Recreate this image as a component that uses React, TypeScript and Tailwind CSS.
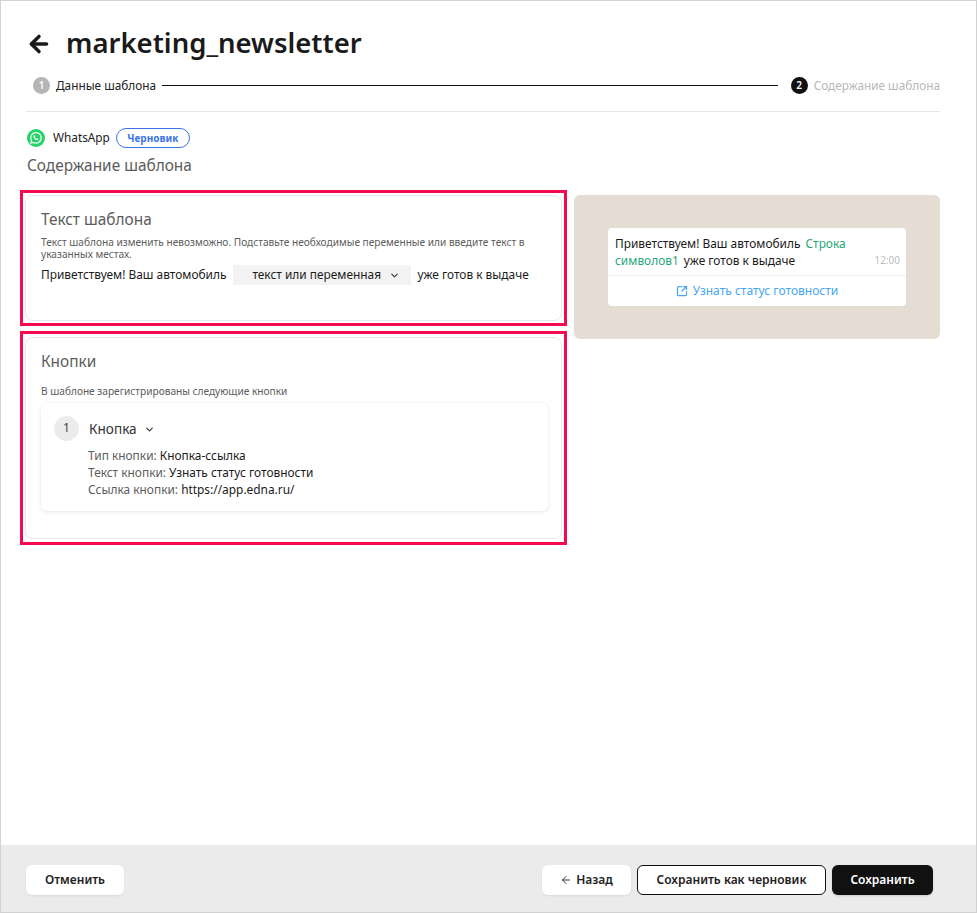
import { ArrowLeft, ChevronDown, SquareArrowOutUpRight } from 'lucide-react';

function WhatsAppIcon() {
  return (
    <svg width="18" height="18" viewBox="0 0 18 18" className="shrink-0">
      <circle cx="9" cy="9" r="9" fill="#25d366" />
      <path
        d="M9 3.7a5.2 5.2 0 0 0-4.5 7.9L3.9 14l2.5-.6A5.2 5.2 0 1 0 9 3.7z"
        fill="none"
        stroke="#fff"
        strokeWidth="1.2"
      />
      <path
        d="M7.2 6.3c-.2 0-.5.1-.6.4-.3.6-.3 1.2.1 1.9.5 1 1.4 1.9 2.5 2.3.7.3 1.3.2 1.8-.2.3-.3.4-.6.3-.9l-1.1-.6-.6.6c-.7-.2-1.4-.9-1.7-1.6l.5-.6-.6-1.2z"
        fill="#fff"
      />
    </svg>
  );
}

function Step({ num, label, active }: { num: number; label: string; active?: boolean }) {
  return (
    <div className="flex items-center gap-[6px] shrink-0">
      <span
        className={`flex h-[17px] w-[17px] items-center justify-center rounded-full text-[10px] font-semibold text-white ${
          active ? 'bg-[#111111]' : 'bg-[#b5b5b5]'
        }`}
      >
        {num}
      </span>
      <span className={`text-[11.8px] ${active ? 'text-[#b8b8b8]' : 'text-[#222222]'}`}>{label}</span>
    </div>
  );
}

export default function App() {
  return (
    <div
      className="flex h-[913px] w-[977px] flex-col border border-[#d2d2d2] bg-white text-[#1a1a1a]"
      style={{ fontFamily: '"Noto Sans", "Open Sans", sans-serif' }}
    >
      <div className="min-h-0 flex-1 pl-[19px] pr-[36px]">
        {/* Header */}
        <div className="flex h-[71px] items-end pb-[10px] pl-[6px]">
          <ArrowLeft size={26} strokeWidth={3.2} className="mr-[14px] mb-[5px] text-[#1a1a1a]" />
          <h1 className="text-[27.5px] leading-[38px] font-semibold text-[#1a1a1a]">marketing_newsletter</h1>
        </div>

        {/* Steps */}
        <div className="ml-[6px] flex h-[27px] items-center justify-between pl-[7px]">
          <Step num={1} label="Данные шаблона" />
          <div className="mx-[6px] h-px flex-1 bg-[#111111]" />
          <div className="ml-[7px]">
            <Step num={2} label="Содержание шаблона" active />
          </div>
        </div>
        <div className="mt-[12px] ml-[6px] h-px bg-[#e6e6e6]" />

        {/* Channel */}
        <div className="mt-[16px] ml-[7px] flex h-[20px] items-center">
          <WhatsAppIcon />
          <span className="ml-[8px] text-[11.8px] text-[#222222]">WhatsApp</span>
          <span className="ml-[6px] flex h-[20px] w-[74px] items-center justify-center rounded-full border border-[#3b73e8] text-[10px] font-bold text-[#3b73e8]">
            Черновик
          </span>
        </div>
        <h2 className="mt-[8px] ml-[7px] text-[15.4px] leading-[20px] text-[#5c5c5c]">Содержание шаблона</h2>

        {/* Main */}
        <div className="mt-[14px] flex items-start gap-[7px]">
          <div className="flex w-[547px] flex-col gap-[5px]">
            <div className="h-[136px] border-[3px] border-[#f50a50] p-[2px]">
              <section className="h-full rounded-[8px] border border-[#e8e8ee] bg-white pt-[14px] pr-[13px] pl-[15px]">
                <h3 className="text-[15.4px] leading-[20px] text-[#5c5c5c]">Текст шаблона</h3>
                <p className="mt-[6px] text-[10.15px] leading-[12px] text-[#5c5c5c]">
                  Текст шаблона изменить невозможно. Подставьте необходимые переменные или введите текст в указанных местах.
                </p>
                <div className="mt-[5px] flex items-center text-[11.9px] text-[#1a1a1a]">
                  <span>Приветствуем! Ваш автомобиль</span>
                  <span className="mr-[6px] ml-[7px] flex h-[20px] w-[178px] items-center bg-[#f3f3f3] pl-[19px]">
                    текст или переменная
                    <ChevronDown size={11} strokeWidth={2.5} className="ml-[8px] text-[#333333]" />
                  </span>
                  <span>уже готов к выдаче</span>
                </div>
              </section>
            </div>

            <div className="h-[214px] border-[3px] border-[#f50a50] px-[2px] py-[3px]">
              <section className="h-full rounded-[8px] border border-[#e8e8ee] bg-white pt-[14px] pr-[13px] pl-[15px]">
                <h3 className="text-[15.4px] leading-[20px] text-[#5c5c5c]">Кнопки</h3>
                <p className="mt-[13px] text-[10.15px] leading-[12px] text-[#5c5c5c]">В шаблоне зарегистрированы следующие кнопки</p>
                <div className="mt-[6px] h-[108px] rounded-[6px] bg-white px-[13px] pt-[13px] shadow-[0_1px_4px_rgba(0,0,0,0.10)]">
                  <div className="flex items-center">
                    <span className="flex h-[25px] w-[25px] items-center justify-center rounded-full bg-[#ececec] pb-[2px] text-[12px] text-[#444444]">
                      1
                    </span>
                    <span className="mt-[2px] ml-[10px] text-[13.6px] text-[#333333]">Кнопка</span>
                    <ChevronDown size={11} strokeWidth={2.5} className="mt-[1px] ml-[7px] text-[#333333]" />
                  </div>
                  <div className="mt-[6px] ml-[34px] text-[11.9px] leading-[17px] text-[#5c5c5c]">
                    <div>
                      Тип кнопки: <span className="text-[#1a1a1a]">Кнопка-ссылка</span>
                    </div>
                    <div>
                      Текст кнопки: <span className="text-[#1a1a1a]">Узнать статус готовности</span>
                    </div>
                    <div>
                      Ссылка кнопки: <span className="text-[#1a1a1a]">https://app.edna.ru/</span>
                    </div>
                  </div>
                </div>
              </section>
            </div>
          </div>

          {/* Preview */}
          <div className="mt-[5px] h-[144px] w-[366px] rounded-[6px] bg-[#e5dcd3] px-[34px] pt-[33px]">
            <div className="rounded-[4px] bg-white">
              <div className="relative h-[47px] px-[7px] pt-[7px] text-[11.9px] leading-[17px] text-[#1a1a1a]">
                <p className="w-[260px]">
                  Приветствуем! Ваш автомобиль <span className="ml-[2px] text-[#1fa77a]">Строка</span>{' '}
                  <span className="mr-[2px] text-[#1fa77a]">символов1</span> уже готов к выдаче
                </p>
                <span className="absolute right-[6px] bottom-[8px] text-[10px] leading-[14px] text-[#bdbdbd]">12:00</span>
              </div>
              <div className="flex h-[31px] items-center justify-center gap-[5px] border-t border-[#ececec] text-[12px] text-[#46a6f5]">
                <SquareArrowOutUpRight size={12} strokeWidth={2.5} />
                Узнать статус готовности
              </div>
            </div>
          </div>
        </div>
      </div>

      {/* Footer */}
      <div className="flex h-[67px] items-center justify-between bg-[#ebebeb] pt-[3px] pr-[43px] pl-[25px] text-[12px] font-semibold">
        <button className="h-[30px] w-[98px] rounded-[6px] bg-white text-[#222222] shadow-[0_1px_2px_rgba(0,0,0,0.08)]">Отменить</button>
        <div className="flex gap-[6px]">
          <button className="flex h-[30px] w-[89px] items-center justify-center gap-[4px] rounded-[6px] bg-white text-[#222222] shadow-[0_1px_2px_rgba(0,0,0,0.08)]">
            <ArrowLeft size={12} strokeWidth={1.8} />
            Назад
          </button>
          <button className="h-[30px] w-[189px] rounded-[6px] border border-[#111111] bg-white text-[#222222]">Сохранить как черновик</button>
          <button className="h-[30px] w-[101px] rounded-[6px] bg-[#111111] text-white shadow-[0_1px_2px_rgba(0,0,0,0.15)]">Сохранить</button>
        </div>
      </div>
    </div>
  );
}
